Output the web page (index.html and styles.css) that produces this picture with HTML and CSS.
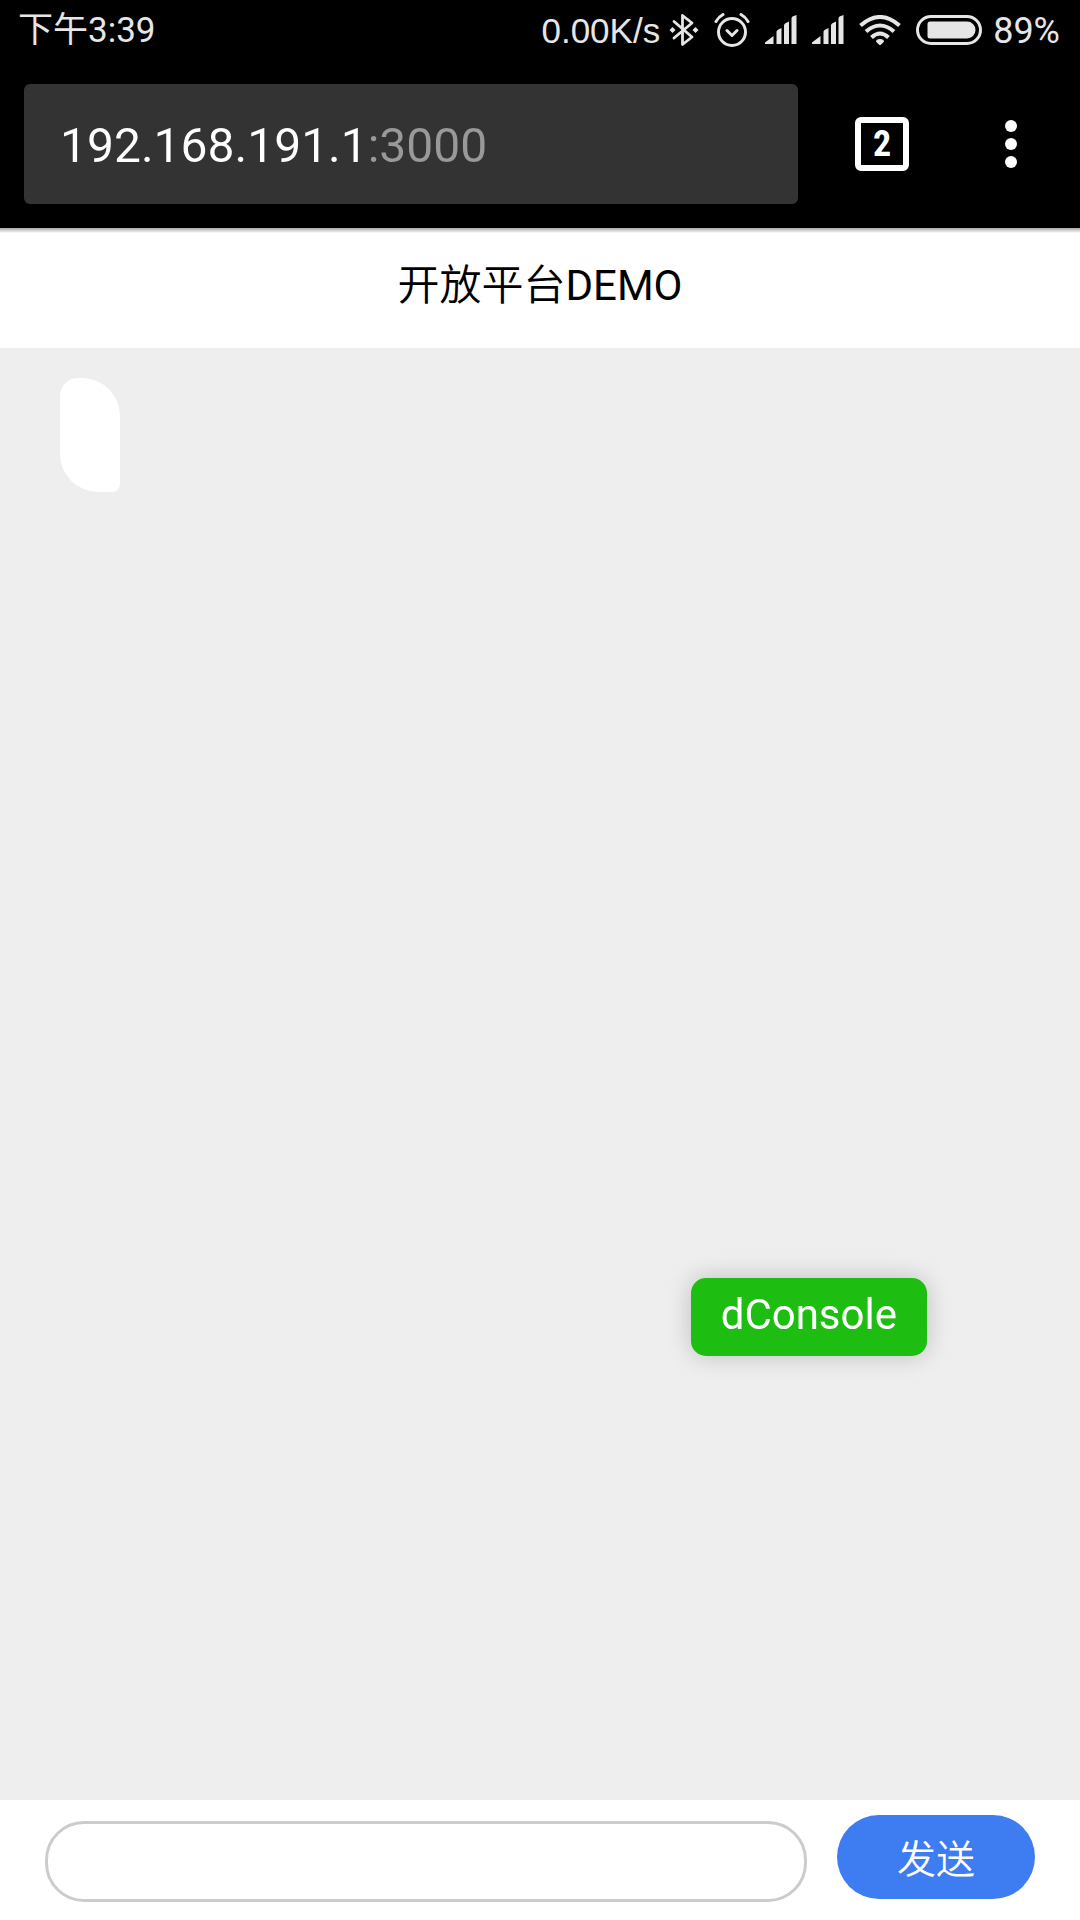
FILE: index.html
```html
<!DOCTYPE html>
<html lang="zh-CN">
<head>
<meta charset="utf-8">
<meta name="viewport" content="width=device-width, initial-scale=1">
<title>开放平台DEMO</title>
<link rel="stylesheet" href="styles.css">
</head>
<body>
<div class="status">
  <span class="time">下午3:39</span>
  <div class="indicators">
    <span class="speed">0.00K/s</span>
    <svg class="icon" width="30" height="36" viewBox="0 0 30 36" aria-label="蓝牙"><path d="M5 9.500 23 25 13.500 32.500V3.500L23 11 5 26" fill="none" stroke="currentColor" stroke-width="2.800" stroke-linecap="round" stroke-linejoin="round"/><path d="m3.500 15 3 3-3 3-3-3zM26.500 15l3 3-3 3-3-3z" fill="currentColor"/></svg>
    <svg class="icon" width="36" height="36" viewBox="0 0 36 36" aria-label="闹钟"><g fill="none" stroke="currentColor" stroke-width="3" stroke-linecap="round" stroke-linejoin="round"><circle cx="18" cy="20" r="13.500"/><path d="M2 9.500Q4.500 5 9 2.500M34 9.500Q31.500 5 27 2.500M13 18.500l5 5 5-5"/></g></svg>
    <svg class="icon" width="32" height="30" viewBox="0 0 32 30" aria-label="信号"><path d="M0 29v-1.500L8.500 21v8zM11.500 29V16.500l1-1.500 4-2V29zM19 29V10l1-1.500 4-2V29zM26.500 29V3l1-1.500L31.500 0v29z" fill="currentColor"/></svg>
    <svg class="icon" width="32" height="30" viewBox="0 0 32 30" aria-label="信号"><path d="M0 29v-1.500L8.500 21v8zM11.500 29V16.500l1-1.500 4-2V29zM19 29V10l1-1.500 4-2V29zM26.500 29V3l1-1.500L31.500 0v29z" fill="currentColor"/></svg>
    <svg class="icon" width="42" height="30" viewBox="0 0 42 30" aria-label="无线网络"><path d="M1.500 10.500Q21-6.500 40.500 10.500M7 16.500Q21 4.500 35 16.500M12.500 22.500Q21 14.500 29.500 22.500" fill="none" stroke="currentColor" stroke-width="4"/><path d="M17 26.500Q17 24 21 24t4 2.500Q24 28 21 30.500 18 28 17 26.500z" fill="currentColor"/></svg>
    <svg class="icon" width="66" height="30" viewBox="0 0 66 30" aria-label="电池"><rect x="1.500" y="1.500" width="63" height="27" rx="13.500" fill="none" stroke="currentColor" stroke-width="3"/><path d="M14 6.500h37a8.500 8.500 0 0 1 0 17H14a2.500 2.500 0 0 1-2.500-2.500V9A2.500 2.500 0 0 1 14 6.500z" fill="currentColor"/></svg>
    <span class="percent">89%</span>
  </div>
</div>
<div class="toolbar">
  <input class="address" type="text" aria-label="网址" value="192.168.191.1:3000">
  <button class="tabs" type="button" aria-label="2 个标签页">2</button>
  <button class="menu" type="button" aria-label="菜单"><svg width="12" height="48" viewBox="0 0 12 48"><g fill="currentColor"><circle cx="6" cy="6" r="6"/><circle cx="6" cy="24" r="6"/><circle cx="6" cy="42" r="6"/></g></svg></button>
</div>
<header class="header"><h1 class="title"><span class="han">开放平台</span>DEMO</h1></header>
<main class="messages"><div class="bubble"></div></main>
<form class="composer">
  <input class="message" type="text" aria-label="消息">
  <button class="send" type="button">发送</button>
</form>
<button class="console" type="button">dConsole</button>
</body>
</html>
```
FILE: styles.css
```css
* { box-sizing: border-box; }

body {
  margin: 0;
  min-height: 100vh;
  display: flex;
  flex-direction: column;
  background: #fff;
  color: #000;
  font-family: Roboto, "Noto Sans CJK SC", sans-serif;
}

button, input { margin: 0; border: 0; padding: 0; font: inherit; }
svg { display: block; flex: none; }

.status {
  display: flex;
  justify-content: space-between;
  align-items: center;
  height: 60px;
  padding: 0 20px 0 18px;
  background: #000;
  color: #e6e6e6;
  font-size: 35px;
  line-height: 60px;
  white-space: nowrap;
}
.indicators { display: flex; align-items: center; gap: 15px; }
.time { padding-top: 2px; }
.speed { margin-right: -6px; padding-top: 2px; font-family: "Liberation Sans", sans-serif; }
.percent { margin-left: -4px; padding-top: 2px; font-size: 36px; }

.toolbar {
  display: flex;
  align-items: center;
  height: 168px;
  padding: 0 63px 0 24px;
  background: #000;
  color: #fff;
}
.address {
  flex: 1;
  min-width: 0;
  height: 120px;
  padding: 2px 36px 0;
  border-radius: 6px;
  background-image: linear-gradient(90deg, #fff 340px, #999 340px), linear-gradient(#333, #333);
  background-clip: text, border-box;
  background-origin: border-box;
  color: #fff;
  -webkit-text-fill-color: transparent;
  font-size: 48px;
}
.tabs {
  flex: none;
  width: 54px;
  height: 54px;
  margin: 0 96px 0 57px;
  border: 6px solid #fff;
  border-radius: 6px;
  background: none;
  color: #fff;
  font: 700 36px/42px "Roboto Condensed", Roboto, sans-serif;
}
.menu { display: flex; background: none; color: #fff; }

.header {
  height: 120px;
  background: linear-gradient(rgba(0, 0, 0, .35), rgba(0, 0, 0, 0) 5px);
  text-align: center;
}
.title { margin: 0; font-size: 42px; font-weight: 400; line-height: 116px; }
.han { font-weight: 350; }

.messages { flex: 1; padding: 30px 60px; background: #eee; }
.bubble {
  width: 60px;
  height: 114px;
  border-radius: 18px 38px 8px 38px;
  background: #fff;
}

.composer {
  display: flex;
  align-items: flex-start;
  gap: 30px;
  padding: 15px 45px 18px;
}
.message {
  flex: 1;
  min-width: 0;
  height: 81px;
  margin-top: 6px;
  padding: 0 36px;
  border: 3px solid #ccc;
  border-radius: 39px;
  background: #fff;
  font-size: 39px;
}
.send {
  width: 198px;
  height: 84px;
  padding-bottom: 2px;
  border-radius: 42px;
  background: #3e7cf1;
  color: #fff;
  font-size: 39px;
  font-weight: 350;
}

.console {
  position: fixed;
  right: 153px;
  bottom: 564px;
  height: 78px;
  padding: 0 30px 6px;
  border-radius: 15px;
  background: #1dbd12;
  box-shadow: 0 0 24px rgba(0, 0, 0, .2);
  color: #fff;
  font-size: 42px;
}
```
